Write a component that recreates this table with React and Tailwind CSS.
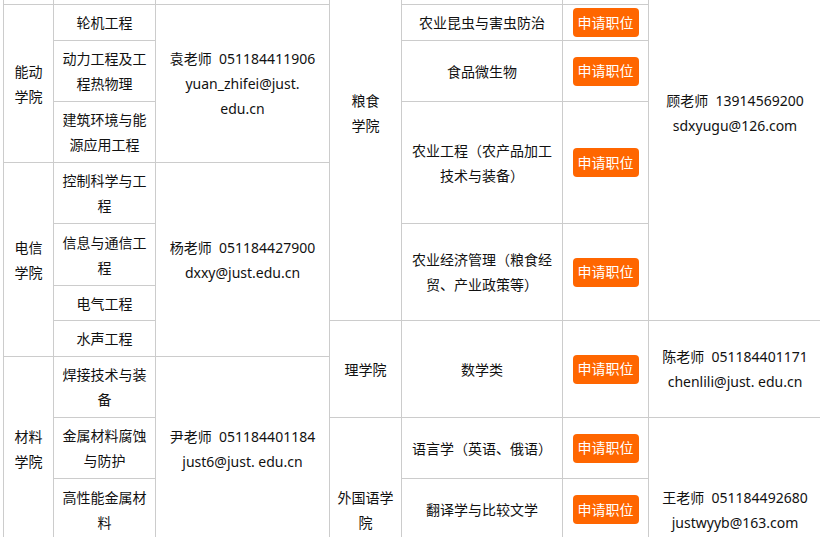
import React from 'react';

const Cell = ({ className = '', lines = [] }) => (
  <div className={`bg-white flex flex-col items-center justify-center text-center leading-[25px] ${className}`}>
    {lines.map((line, i) => (
      <span key={i} className="whitespace-pre">{line}</span>
    ))}
  </div>
);

const ApplyButton = ({ className = '' }) => (
  <div className={`bg-white flex items-center justify-center ${className}`}>
    <button className="w-[66px] h-[29px] rounded-[4px] bg-[#ff6600] text-white text-[14px] leading-[20px] flex items-center justify-center">
      申请职位
    </button>
  </div>
);

export default function App() {
  return (
    <div className="w-[820px] h-[537px] overflow-hidden bg-white text-[14px] text-[#111] font-['Noto_Sans','Noto_Sans_CJK_SC',sans-serif]">
      {/* table, scrolled so the first rows sit above the window */}
      <div className="ml-[3px] -mt-[94px] w-max grid gap-px pl-px pr-px bg-[#cccccc] grid-cols-[49px_101px_173px_71px_160px_85px_172px] grid-rows-[98px_35px_60px_60px_60px_61px_34px_35px_60px_60px_61px_61px]">
        {/* previous rows, cut off */}
        <Cell className="col-start-1 row-start-1" />
        <Cell className="col-start-2 row-start-1" />
        <Cell className="col-start-3 row-start-1" />

        {/* 能动学院 */}
        <Cell className="col-start-1 row-start-2 row-span-3" lines={['能动', '学院']} />
        <Cell className="col-start-2 row-start-2" lines={['轮机工程']} />
        <Cell className="col-start-2 row-start-3" lines={['动力工程及工', '程热物理']} />
        <Cell className="col-start-2 row-start-4" lines={['建筑环境与能', '源应用工程']} />
        <Cell
          className="col-start-3 row-start-2 row-span-3"
          lines={['袁老师\u00a0 051184411906', 'yuan_zhifei@just.', 'edu.cn']}
        />

        {/* 电信学院 */}
        <Cell className="col-start-1 row-start-5 row-span-4" lines={['电信', '学院']} />
        <Cell className="col-start-2 row-start-5" lines={['控制科学与工', '程']} />
        <Cell className="col-start-2 row-start-6" lines={['信息与通信工', '程']} />
        <Cell className="col-start-2 row-start-7" lines={['电气工程']} />
        <Cell className="col-start-2 row-start-8" lines={['水声工程']} />
        <Cell
          className="col-start-3 row-start-5 row-span-4"
          lines={['杨老师\u00a0 051184427900', 'dxxy@just.edu.cn']}
        />

        {/* 材料学院 */}
        <Cell className="col-start-1 row-start-9 row-span-3" lines={['材料', '学院']} />
        <Cell className="col-start-2 row-start-9" lines={['焊接技术与装', '备']} />
        <Cell className="col-start-2 row-start-10" lines={['金属材料腐蚀', '与防护']} />
        <Cell className="col-start-2 row-start-11" lines={['高性能金属材', '料']} />
        <Cell
          className="col-start-3 row-start-9 row-span-3"
          lines={['尹老师\u00a0 051184401184', 'just6@just. edu.cn']}
        />
        <Cell className="col-start-1 row-start-12" />
        <Cell className="col-start-2 row-start-12" />
        <Cell className="col-start-3 row-start-12" />

        {/* 粮食学院 */}
        <Cell className="col-start-4 row-start-1 row-span-7" lines={['粮食', '学院']} />
        <Cell className="col-start-5 row-start-1" />
        <Cell className="col-start-6 row-start-1" />
        <Cell className="col-start-5 row-start-2" lines={['农业昆虫与害虫防治']} />
        <ApplyButton className="col-start-6 row-start-2" />
        <Cell className="col-start-5 row-start-3" lines={['食品微生物']} />
        <ApplyButton className="col-start-6 row-start-3" />
        <Cell className="col-start-5 row-start-4 row-span-2" lines={['农业工程（农产品加工', '技术与装备）']} />
        <ApplyButton className="col-start-6 row-start-4 row-span-2" />
        <Cell className="col-start-5 row-start-6 row-span-2" lines={['农业经济管理（粮食经', '贸、产业政策等）']} />
        <ApplyButton className="col-start-6 row-start-6 row-span-2" />
        <Cell
          className="col-start-7 row-start-1 row-span-7"
          lines={['顾老师\u00a0 13914569200', 'sdxyugu@126.com']}
        />

        {/* 理学院 */}
        <Cell className="col-start-4 row-start-8 row-span-2" lines={['理学院']} />
        <Cell className="col-start-5 row-start-8 row-span-2" lines={['数学类']} />
        <ApplyButton className="col-start-6 row-start-8 row-span-2" />
        <Cell
          className="col-start-7 row-start-8 row-span-2"
          lines={['陈老师\u00a0 051184401171', 'chenlili@just. edu.cn']}
        />

        {/* 外国语学院 */}
        <Cell className="col-start-4 row-start-10 row-span-3" lines={['外国语学', '院']} />
        <Cell className="col-start-5 row-start-10" lines={['语言学（英语、俄语）']} />
        <ApplyButton className="col-start-6 row-start-10" />
        <Cell className="col-start-5 row-start-11" lines={['翻译学与比较文学']} />
        <ApplyButton className="col-start-6 row-start-11" />
        <Cell className="col-start-5 row-start-12" />
        <Cell className="col-start-6 row-start-12" />
        <Cell
          className="col-start-7 row-start-10 row-span-3"
          lines={['王老师\u00a0 051184492680', 'justwyyb@163.com']}
        />
      </div>
    </div>
  );
}
